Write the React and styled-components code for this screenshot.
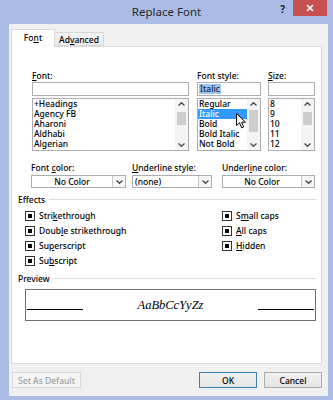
import React from "react";
import styled, { createGlobalStyle } from "styled-components";

const FRAME = "#aabbe6";

const GlobalStyle = createGlobalStyle`
  html, body { margin: 0; padding: 0; background: #fff; }
  body {
    font-family: "Noto Sans", "Open Sans", sans-serif;
    font-size: 8.5px;
    font-weight: 500;
    color: #000;
  }
  * { box-sizing: border-box; }
  u { text-decoration: underline; text-underline-offset: 1px; text-decoration-thickness: 1px; }
`;

const Window = styled.div`
  position: relative;
  width: 333px;
  height: 400px;
  display: flex;
  flex-direction: column;
  background: ${FRAME};
`;

const TitleBar = styled.div`
  height: 24px;
  flex: none;
  display: grid;
  grid-template-columns: 1fr auto 1fr;
  align-items: center;
`;

const Title = styled.div`
  font-size: 11.5px;
  font-weight: 400;
  color: #2b2b2b;
  line-height: 14px;
`;

const TitleControls = styled.div`
  align-self: start;
  display: flex;
  justify-content: flex-end;
  padding-right: 6px;
`;

const Help = styled.span`
  margin: 3px 8px 0 0;
  font-size: 10px;
  font-weight: 700;
  color: #222;
  line-height: 12px;
`;

const Close = styled.div`
  width: 34px;
  height: 16px;
  background: #c75050;
  display: flex;
  align-items: center;
  justify-content: center;
`;

const Body = styled.div`
  flex: 1;
  display: flex;
  flex-direction: column;
  background: #f0f0f0;
  border-left: 9px solid ${FRAME};
  border-right: 5px solid ${FRAME};
  border-bottom: 4px solid ${FRAME};
  padding: 5px 6px 0 2px;
`;

const TabStrip = styled.div`
  height: 17px;
  display: flex;
  align-items: flex-end;
`;

const Tab = styled.div`
  position: relative;
  z-index: 1;
  height: ${(p) => (p.$active ? "18px" : "14px")};
  margin-bottom: ${(p) => (p.$active ? "-1px" : "0")};
  width: ${(p) => p.$w}px;
  background: ${(p) => (p.$active ? "#fff" : "linear-gradient(#f4f4f4, #e9e9e9)")};
  border: 1px solid #d9d9d9;
  border-bottom: ${(p) => (p.$active ? "none" : "1px solid #d9d9d9")};
  border-left: ${(p) => (p.$active ? "1px solid #d9d9d9" : "none")};
  display: flex;
  align-items: center;
  justify-content: center;
  padding-bottom: ${(p) => (p.$active ? "2px" : "0")};
`;

const Panel = styled.div`
  height: 318px;
  background: #fff;
  border: 1px solid #d9d9d9;
  display: flex;
  flex-direction: column;
`;

const Pickers = styled.div`
  padding: 23px 0 0 20px;
  display: grid;
  grid-template-columns: 158px 64px 47px;
  column-gap: 7px;
`;

const Field = styled.div`
  display: flex;
  flex-direction: column;
  width: ${(p) => (p.$w ? `${p.$w}px` : "100%")};
`;

const Label = styled.div`
  height: 11px;
  line-height: 11px;
  margin-bottom: ${(p) => p.$mb ?? 1}px;
  white-space: nowrap;
`;

const TextBox = styled.div`
  height: 14px;
  border: 1px solid #abadb3;
  background: #fff;
  padding: 1px 1px;
  line-height: 10px;
`;

const Highlight = styled.span`
  background: #9cc5f0;
  color: #0e1c4a;
  padding: 0 1px;
  display: inline-block;
  line-height: 10px;
`;

const ListBox = styled.div`
  margin-top: 2px;
  height: 53px;
  border: 1px solid #abadb3;
  display: flex;
  background: #fff;
`;

const Items = styled.div`
  flex: 1;
  display: flex;
  flex-direction: column;
`;

const Item = styled.div`
  height: 10px;
  line-height: 10px;
  padding-left: 1px;
  white-space: nowrap;
  background: ${(p) => (p.$selected ? "#3399ff" : "transparent")};
  color: ${(p) => (p.$selected ? "#fff" : "#000")};
`;

const ScrollBar = styled.div`
  width: 13px;
  display: flex;
  flex-direction: column;
  background: #f4f4f4;
`;

const ScrollArrow = styled.div`
  height: 10px;
  display: flex;
  align-items: center;
  justify-content: center;
`;

const Track = styled.div`
  flex: 1;
  padding: 0 2px;
`;

const Thumb = styled.div`
  margin-top: ${(p) => p.$top}px;
  height: ${(p) => p.$h}px;
  background: #cdcdcd;
`;

const ColorRow = styled.div`
  margin-top: 11px;
  padding-left: 19px;
  display: grid;
  grid-template-columns: 95px 84px 93px;
  column-gap: 6px;
`;

const Dropdown = styled.div`
  height: 13px;
  width: ${(p) => (p.$w ? `${p.$w}px` : "100%")};
  border: 1px solid #abadb3;
  background: #fff;
  display: flex;
`;

const DropValue = styled.div`
  flex: 1;
  line-height: 11px;
  text-align: ${(p) => (p.$left ? "left" : "center")};
  padding-left: ${(p) => (p.$left ? "2px" : "0")};
`;

const DropArrow = styled.div`
  width: 13px;
  border-left: 1px solid #c8c8c8;
  background: #f6f6f6;
  display: flex;
  align-items: center;
  justify-content: center;
`;

const GroupHeader = styled.div`
  margin-top: ${(p) => p.$mt}px;
  height: 11px;
  padding: 0 5px 0 6px;
  display: flex;
  align-items: center;
  gap: 4px;
  line-height: 11px;
  &::after {
    content: "";
    flex: 1;
    height: 1px;
    background: #dcdcdc;
  }
`;

const Effects = styled.div`
  margin-top: 3px;
  padding-left: 13px;
  display: grid;
  grid-template-columns: 197px 1fr;
  grid-auto-rows: 15px;
`;

const Check = styled.div`
  display: flex;
  align-items: center;
  gap: 4px;
  white-space: nowrap;
`;

const Box = styled.span`
  width: 10px;
  height: 10px;
  border: 1px solid #333;
  display: flex;
  align-items: center;
  justify-content: center;
  background: #fff;
  &::after {
    content: "";
    width: 4px;
    height: 4px;
    background: #000;
  }
`;

const PreviewBox = styled.div`
  margin: 5px 0 0 13px;
  width: 291px;
  height: 32px;
  border: 1px solid #707070;
  display: grid;
  grid-template-columns: 56px 1fr 56px;
  align-items: center;
  padding: 0 1px;
`;

const Rule = styled.div`
  align-self: end;
  margin-bottom: 10px;
  height: 1px;
  background: #000;
`;

const Sample = styled.div`
  text-align: center;
  font-family: "Liberation Serif", "Times New Roman", serif;
  font-style: italic;
  font-weight: 400;
  font-size: 12.5px;
  line-height: 14px;
`;

const Buttons = styled.div`
  margin-top: 8px;
  display: flex;
  gap: 7px;
`;

const Button = styled.div`
  width: ${(p) => p.$w}px;
  height: 16px;
  display: flex;
  align-items: center;
  justify-content: center;
  border: 1px solid ${(p) => (p.$default ? "#3c7fb1" : p.$disabled ? "#d9d9d9" : "#acacac")};
  background: ${(p) => (p.$disabled ? "#f4f4f4" : "linear-gradient(#f0f0f0, #e5e5e5)")};
  color: ${(p) => (p.$disabled ? "#a0a0a0" : "#000")};
  margin-left: ${(p) => p.$ml ?? 0}px;
`;

const Spacer = styled.div`
  flex: 1;
`;

const Cursor = styled.svg`
  position: absolute;
  left: 236px;
  top: 113px;
`;

const Chevron = ({ up }) => (
  <svg width="7" height="4" viewBox="0 0 7 4">
    <polyline
      points={up ? "0.5,3.5 3.5,0.7 6.5,3.5" : "0.5,0.5 3.5,3.3 6.5,0.5"}
      fill="none"
      stroke="#4a4a4a"
      strokeWidth="1.3"
    />
  </svg>
);

const pickers = [
  {
    label: <><u>F</u>ont:</>,
    width: 157,
    items: ["+Headings", "Agency FB", "Aharoni", "Aldhabi", "Algerian"],
    thumb: [3, 13],
  },
  {
    label: "Font style:",
    value: "Italic",
    items: ["Regular", "Italic", "Bold", "Bold Italic", "Not Bold"],
    selected: 1,
    thumb: [1, 22],
  },
  {
    label: <><u>S</u>ize:</>,
    items: ["8", "9", "10", "11", "12"],
    thumb: [3, 13],
  },
];

const effects = [
  <>Stri<u>k</u>ethrough</>,
  <>S<u>m</u>all caps</>,
  <>Doub<u>l</u>e strikethrough</>,
  <><u>A</u>ll caps</>,
  <>Su<u>p</u>erscript</>,
  <><u>H</u>idden</>,
  <>Su<u>b</u>script</>,
];

const Picker = ({ label, width, value, items, selected, thumb }) => (
  <Field $w={width}>
    <Label>{label}</Label>
    <TextBox>{value && <Highlight>{value}</Highlight>}</TextBox>
    <ListBox>
      <Items>
        {items.map((it, i) => (
          <Item key={it} $selected={i === selected}>
            {it}
          </Item>
        ))}
      </Items>
      <ScrollBar>
        <ScrollArrow><Chevron up /></ScrollArrow>
        <Track>
          <Thumb $top={thumb[0]} $h={thumb[1]} />
        </Track>
        <ScrollArrow><Chevron /></ScrollArrow>
      </ScrollBar>
    </ListBox>
  </Field>
);

export default function App() {
  return (
    <>
      <GlobalStyle />
      <Window>
        <TitleBar>
          <div />
          <Title>Replace Font</Title>
          <TitleControls>
            <Help>?</Help>
            <Close>
              <svg width="8" height="8" viewBox="0 0 8 8">
                <path d="M1 1 L7 7 M7 1 L1 7" stroke="#fff" strokeWidth="1.6" />
              </svg>
            </Close>
          </TitleControls>
        </TitleBar>
        <Body>
          <TabStrip>
            <Tab $active $w={44}>Fo<u>n</u>t</Tab>
            <Tab $w={49}>Ad<u>v</u>anced</Tab>
          </TabStrip>
          <Panel>
            <Pickers>
              {pickers.map((p, i) => (
                <Picker key={i} {...p} />
              ))}
            </Pickers>
            <ColorRow>
              <Field>
                <Label $mb={2}>Font <u>c</u>olor:</Label>
                <Dropdown>
                  <DropValue>No Color</DropValue>
                  <DropArrow><Chevron /></DropArrow>
                </Dropdown>
              </Field>
              <Field>
                <Label $mb={2}><u>U</u>nderline style:</Label>
                <Dropdown $w={80}>
                  <DropValue $left>(none)</DropValue>
                  <DropArrow><Chevron /></DropArrow>
                </Dropdown>
              </Field>
              <Field>
                <Label $mb={2}>Underl<u>i</u>ne color:</Label>
                <Dropdown>
                  <DropValue>No Color</DropValue>
                  <DropArrow><Chevron /></DropArrow>
                </Dropdown>
              </Field>
            </ColorRow>
            <GroupHeader $mt={6}>Effects</GroupHeader>
            <Effects>
              {effects.map((e, i) => (
                <Check key={i}>
                  <Box />
                  <span>{e}</span>
                </Check>
              ))}
            </Effects>
            <GroupHeader $mt={5}>Preview</GroupHeader>
            <PreviewBox>
              <Rule />
              <Sample>AaBbCcYyZz</Sample>
              <Rule />
            </PreviewBox>
          </Panel>
          <Buttons>
            <Button $w={69} $ml={1} $disabled>Set As Default</Button>
            <Spacer />
            <Button $w={58} $default>OK</Button>
            <Button $w={58}>Cancel</Button>
          </Buttons>
        </Body>
        <Cursor width="11" height="17" viewBox="0 0 11 17">
          <path
            d="M0.5 0.5 L0.5 12.5 L3.5 9.8 L5.6 14.8 L7.6 14 L5.6 9.2 L9.5 9.2 Z"
            fill="#fff"
            stroke="#000"
            strokeWidth="1"
            strokeLinejoin="round"
          />
        </Cursor>
      </Window>
    </>
  );
}
